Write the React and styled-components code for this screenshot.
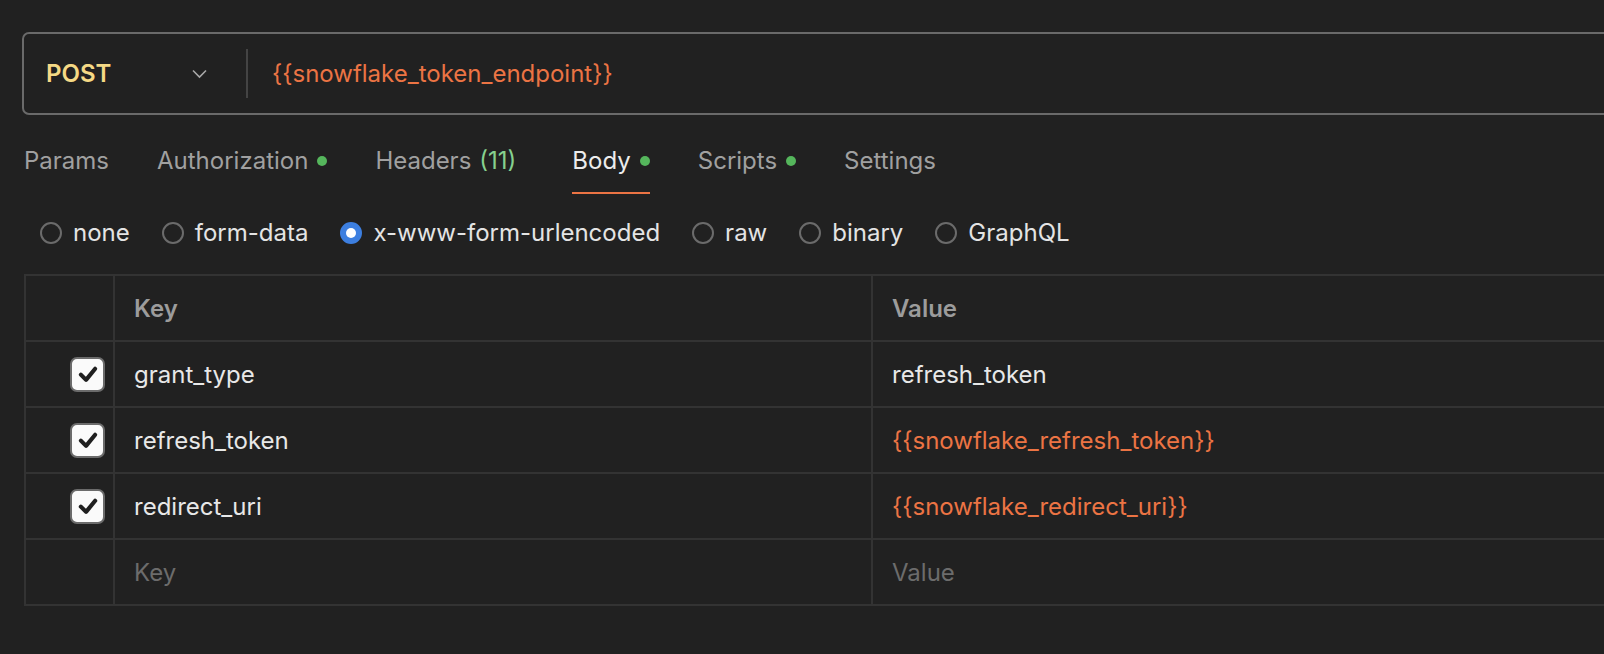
import styled, { createGlobalStyle } from 'styled-components'

const GlobalStyle = createGlobalStyle`
    body {
        margin: 0;
        background: #212121;
        font-family: Inter, "Noto Sans", sans-serif;
        overflow: hidden;
    }
`

const tabs = [
    { label: 'Params' },
    { label: 'Authorization', dot: true },
    { label: 'Headers', count: '(11)' },
    { label: 'Body', dot: true, active: true },
    { label: 'Scripts', dot: true },
    { label: 'Settings' },
]

const bodyTypes = ['none', 'form-data', 'x-www-form-urlencoded', 'raw', 'binary', 'GraphQL']

const rows = [
    { key: 'grant_type', value: 'refresh_token' },
    { key: 'refresh_token', value: '{{snowflake_refresh_token}}', variable: true },
    { key: 'redirect_uri', value: '{{snowflake_redirect_uri}}', variable: true },
]

const App = () => {
    return (
        <Page>
            <GlobalStyle />
            <UrlBar>
                <Method>
                    <span>POST</span>
                    <Chevron viewBox="0 0 16 10">
                        <path d="M1.5 1.5 L8 8 L14.5 1.5" />
                    </Chevron>
                </Method>
                <Divider />
                <Url>{'{{snowflake_token_endpoint}}'}</Url>
            </UrlBar>

            <Tabs>
                {tabs.map(tab => (
                    <Tab key={tab.label} $active={tab.active}>
                        {tab.label}
                        {tab.count && <Count>{tab.count}</Count>}
                        {tab.dot && <Dot />}
                    </Tab>
                ))}
            </Tabs>

            <Radios>
                {bodyTypes.map(type => (
                    <RadioItem key={type}>
                        <Radio $checked={type === 'x-www-form-urlencoded'} />
                        {type}
                    </RadioItem>
                ))}
            </Radios>

            <Table>
                <Cell />
                <HeadCell>Key</HeadCell>
                <HeadCell $last>Value</HeadCell>

                {rows.map(row => (
                    <Row key={row.key}>
                        <CheckCell>
                            <Checkbox>
                                <svg viewBox="0 0 20 20">
                                    <path d="M4.5 10.5 L8.5 14.5 L15.5 6" />
                                </svg>
                            </Checkbox>
                        </CheckCell>
                        <Cell>{row.key}</Cell>
                        <Cell $last $variable={row.variable}>{row.value}</Cell>
                    </Row>
                ))}

                <Cell />
                <Cell $placeholder>Key</Cell>
                <Cell $last $placeholder>Value</Cell>
            </Table>
        </Page>
    )
}

const Page = styled.div`
    padding-top: 32px;
    width: 1604px;
    height: 654px;
    box-sizing: border-box;
`

const UrlBar = styled.div`
    display: flex;
    align-items: center;
    height: 83px;
    margin-left: 22px;
    margin-right: -20px;
    border: 2px solid #6a6a6a;
    border-radius: 7px;
    box-sizing: border-box;
`

const Method = styled.div`
    display: flex;
    align-items: center;
    justify-content: space-between;
    width: 222px;
    box-sizing: border-box;
    padding: 0 38px 0 22px;
    font-size: 24px;
    font-weight: 600;
    color: #f5d985;
`

const Chevron = styled.svg`
    width: 17px;
    height: 10px;
    fill: none;
    stroke: #a8a8a8;
    stroke-width: 1.6;
`

const Divider = styled.div`
    width: 2px;
    height: 49px;
    background: #444;
`

const Url = styled.div`
    padding-left: 24px;
    font-size: 24px;
    color: #ec7444;
`

const Tabs = styled.div`
    display: flex;
    gap: 48px;
    margin-top: 31px;
    padding-left: 24px;
`

const Tab = styled.div`
    display: flex;
    align-items: center;
    line-height: 30px;
    padding-bottom: 16px;
    font-size: 24px;
    color: ${p => p.$active ? '#ececec' : '#a0a0a0'};
    border-bottom: 2px solid ${p => p.$active ? '#ec7444' : 'transparent'};
`

const Count = styled.span`
    margin: 0 8px 0 8px;
    color: #86d08f;
`

const Dot = styled.span`
    width: 10px;
    height: 10px;
    margin-left: 9px;
    border-radius: 50%;
    background: #55b65c;
`

const Radios = styled.div`
    display: flex;
    gap: 32px;
    margin-top: 24px;
    padding-left: 40px;
`

const RadioItem = styled.div`
    display: flex;
    align-items: center;
    gap: 11px;
    line-height: 30px;
    font-size: 24px;
    color: #e4e4e4;
`

const Radio = styled.span`
    position: relative;
    width: 22px;
    height: 22px;
    box-sizing: border-box;
    border-radius: 50%;
    border: 2px solid ${p => p.$checked ? '#3d7fe0' : '#6b6b6b'};
    background: ${p => p.$checked ? '#3d7fe0' : 'transparent'};

    &::after {
        content: '';
        display: ${p => p.$checked ? 'block' : 'none'};
        position: absolute;
        top: 4px;
        left: 4px;
        width: 10px;
        height: 10px;
        border-radius: 50%;
        background: #fff;
    }
`

const Table = styled.div`
    display: grid;
    grid-template-columns: 89px 758px 1fr;
    margin-top: 26px;
    margin-left: 24px;
    margin-right: -20px;
    border-top: 2px solid #333;
    border-left: 2px solid #333;
`

const Row = styled.div`
    display: contents;
`

const Cell = styled.div`
    display: flex;
    align-items: center;
    height: 66px;
    box-sizing: border-box;
    padding-left: 19px;
    border-bottom: 2px solid #333;
    border-right: ${p => p.$last ? 'none' : '2px solid #333'};
    font-size: 24px;
    color: ${p => p.$placeholder ? '#6c6c6c' : p.$variable ? '#ec7444' : '#e8e8e8'};
`

const HeadCell = styled(Cell)`
    font-weight: 600;
    color: #9c9c9c;
`

const CheckCell = styled(Cell)`
    justify-content: flex-end;
    padding: 0 8px 0 0;
`

const Checkbox = styled.span`
    display: flex;
    align-items: center;
    justify-content: center;
    width: 35px;
    height: 35px;
    box-sizing: border-box;
    border: 2px solid #6b6b6b;
    border-radius: 7px;
    background: #fafafa;

    svg {
        width: 26px;
        height: 26px;
        fill: none;
        stroke: #1f1f1f;
        stroke-width: 3.2;
        stroke-linecap: round;
        stroke-linejoin: round;
    }
`

export default App
